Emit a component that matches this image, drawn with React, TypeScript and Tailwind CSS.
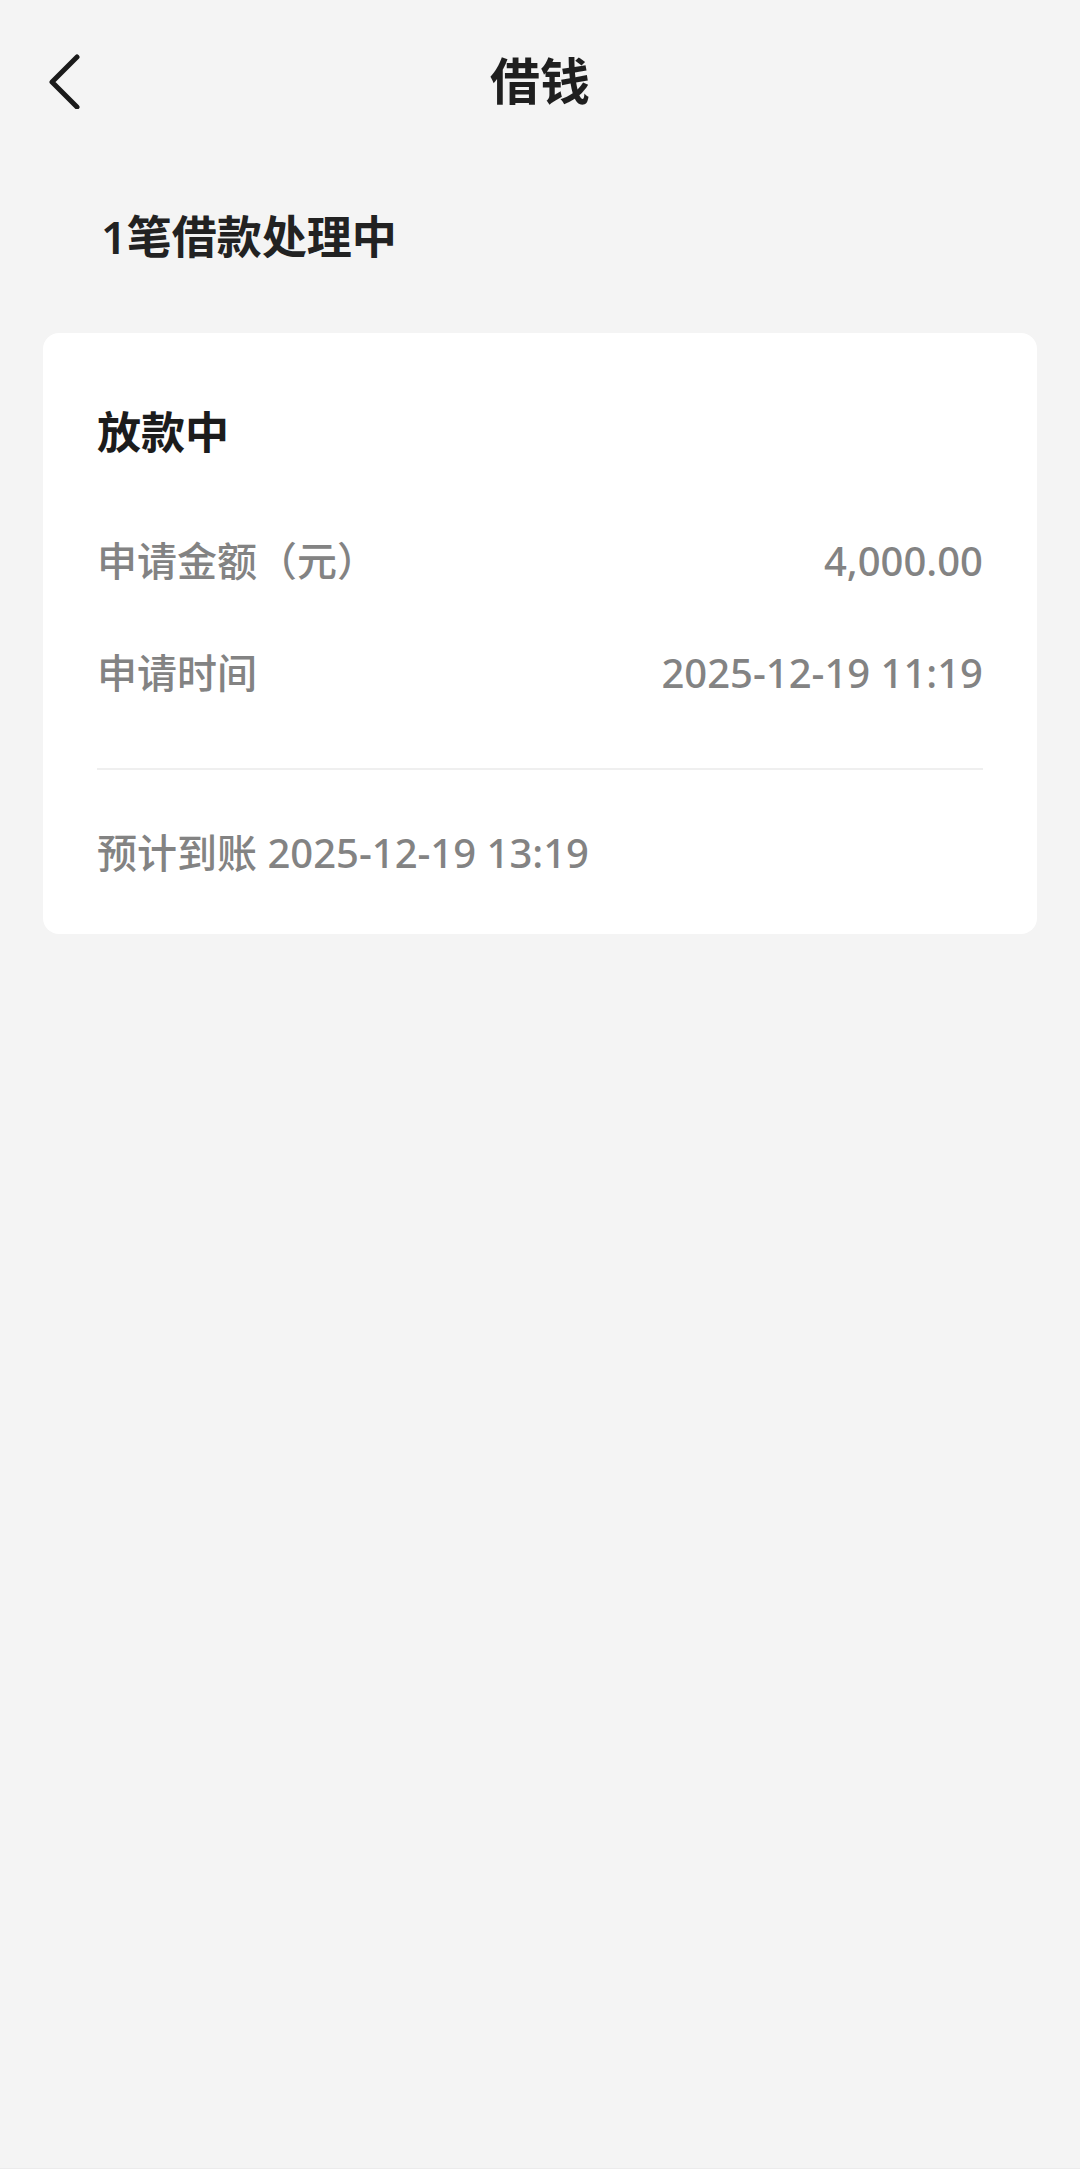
import React from 'react';

const BackIcon: React.FC = () => (
  <svg width="36" height="56" viewBox="0 0 36 56" fill="none">
    <path d="M31 4 L6 29 L31 54" stroke="#1a1a1a" strokeWidth="5" strokeLinecap="round" strokeLinejoin="round" />
  </svg>
);

const Row: React.FC<{ label: string; value: string; className?: string }> = ({ label, value, className }) => (
  <div className={`flex items-center justify-between text-[40px] leading-[40px] font-medium text-[#838383] ${className ?? ''}`}>
    <span>{label}</span>
    <span>{value}</span>
  </div>
);

const App: React.FC = () => {
  return (
    <div
      className="min-h-[2175px] bg-[#f4f4f4] flex flex-col"
      style={{ fontFamily: '"Noto Sans", "Noto Sans CJK SC", sans-serif' }}
    >
      <header className="h-[162px] grid grid-cols-[1fr_auto_1fr] items-center">
        <div className="pl-[46px] flex items-center">
          <BackIcon />
        </div>
        <h1 className="text-[50px] leading-[50px] font-bold text-[#1f1f1f]">借钱</h1>
        <div />
      </header>

      <p className="mt-[53px] pl-[101px] text-[45px] leading-[44px] font-semibold text-[#222222]">1笔借款处理中</p>

      <section className="mt-[74px] mx-[43px] bg-white rounded-[16px] px-[54px] pt-[77px] pb-[61px]">
        <h2 className="text-[44px] leading-[44px] font-bold text-[#1c1c1c]">放款中</h2>
        <Row className="mt-[87px]" label="申请金额（元）" value="4,000.00" />
        <Row className="mt-[72px]" label="申请时间" value="2025-12-19 11:19" />
        <div className="mt-[75px] h-[2px] bg-[#efefef]" />
        <p className="mt-[63px] text-[40px] leading-[40px] font-medium text-[#838383]">预计到账 2025-12-19 13:19</p>
      </section>

      <div className="flex-1" />
      <div className="h-[7px] bg-white border-t border-[#ececec]" />
    </div>
  );
};

export default App;
